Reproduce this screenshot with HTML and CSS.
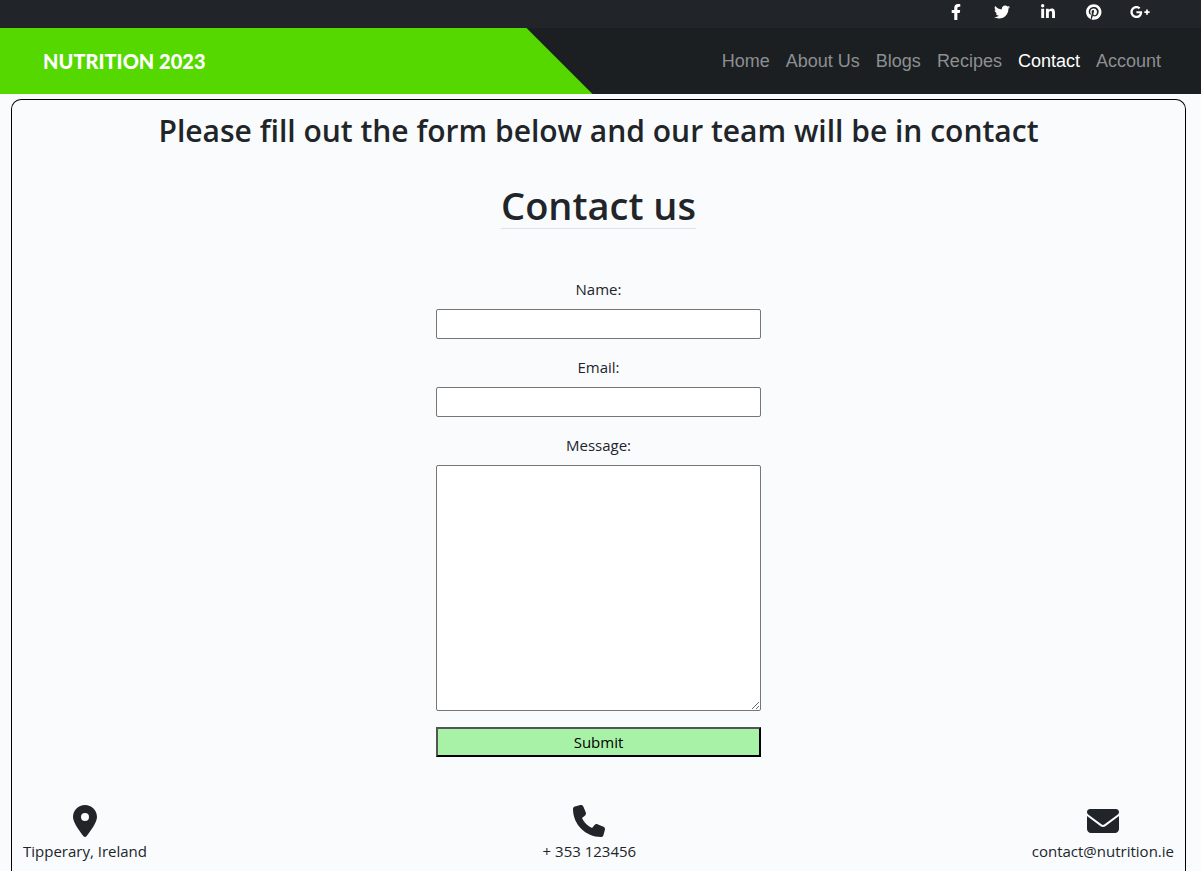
FILE: index.html
```html
<!DOCTYPE html>
<html lang="en">
<head>
<meta charset="utf-8">
<meta name="viewport" content="width=device-width, initial-scale=1">
<title>Nutrition 2023 - Contact</title>
<link rel="stylesheet" href="styles.css">
</head>
<body>
<div class="social">
  <a class="social-link" href="#" aria-label="Facebook"><svg class="social-icon" viewBox="0 0 320 512"><path d="M279.14 288l14.22-92.66h-88.91v-60.13c0-25.35 12.42-50.06 52.24-50.06h40.42V6.26S260.43 0 225.36 0c-73.22 0-121.08 44.38-121.08 124.72v70.62H22.89V288h81.39v224h100.17V288z"/></svg></a>
  <a class="social-link" href="#" aria-label="Twitter"><svg class="social-icon" viewBox="0 0 512 512"><path d="M459.37 151.716c.325 4.548.325 9.097.325 13.645 0 138.72-105.583 298.558-298.558 298.558-59.452 0-114.68-17.219-161.137-47.106 8.447.974 16.568 1.299 25.34 1.299 49.055 0 94.213-16.568 130.274-44.832-46.132-.975-84.792-31.188-98.112-72.772 6.498.974 12.995 1.624 19.818 1.624 9.421 0 18.843-1.3 27.614-3.573-48.081-9.747-84.143-51.98-84.143-102.985v-1.299c13.969 7.797 30.214 12.67 47.431 13.319-28.264-18.843-46.781-51.005-46.781-87.391 0-19.492 5.197-37.36 14.294-52.954 51.655 63.675 129.3 105.258 216.365 109.807-1.624-7.797-2.599-15.918-2.599-24.04 0-57.828 46.782-104.934 104.934-104.934 30.213 0 57.502 12.67 76.67 33.137 23.715-4.548 46.456-13.32 66.599-25.34-7.798 24.366-24.366 44.833-46.132 57.827 21.117-2.273 41.584-8.122 60.426-16.243-14.292 20.791-32.161 39.308-52.628 54.253z"/></svg></a>
  <a class="social-link" href="#" aria-label="LinkedIn"><svg class="social-icon" viewBox="0 0 448 512"><path d="M100.28 448H7.4V148.9h92.88zM53.79 108.1C24.09 108.1 0 83.5 0 53.8a53.79 53.79 0 0 1 107.58 0c0 29.7-24.1 54.3-53.79 54.3zM447.9 448h-92.68V302.4c0-34.7-.7-79.2-48.29-79.2-48.29 0-55.69 37.7-55.69 76.7V448h-92.78V148.9h89.08v40.8h1.3c12.4-23.5 42.69-48.3 87.88-48.3 94 0 111.28 61.9 111.28 142.3V448z"/></svg></a>
  <a class="social-link" href="#" aria-label="Pinterest"><svg class="social-icon" viewBox="0 0 496 512"><path d="M496 256c0 137-111 248-248 248-25.6 0-50.2-3.9-73.4-11.1 10.1-16.5 25.2-43.5 30.8-65 3-11.6 15.4-59 15.4-59 8.1 15.4 31.7 28.5 56.8 28.5 74.8 0 128.7-68.8 128.7-154.3 0-81.9-66.9-143.2-152.9-143.2-107 0-163.9 71.8-163.9 150.1 0 36.4 19.4 81.7 50.3 96.1 4.7 2.2 7.2 1.2 8.3-3.3.8-3.4 5-20.3 6.9-28.1.6-2.5.3-4.7-1.7-7.1-10.1-12.5-18.3-35.3-18.3-56.6 0-54.7 41.4-107.6 112-107.6 60.9 0 103.6 41.5 103.6 100.9 0 67.1-33.9 113.6-78 113.6-24.3 0-42.6-20.1-36.7-44.8 7-29.5 20.5-61.3 20.5-82.6 0-19-10.2-34.9-31.4-34.9-24.9 0-44.9 25.7-44.9 60.2 0 22 7.4 36.8 7.4 36.8s-24.5 103.8-29 123.2c-5 21.4-3 51.6-.9 71.2C65.4 450.9 0 361.1 0 256 0 119 111 8 248 8s248 111 248 248z"/></svg></a>
  <a class="social-link" href="#" aria-label="Google Plus"><svg class="social-icon" viewBox="0 0 640 512"><path d="M386.061 228.496c1.834 9.692 3.143 19.384 3.143 31.956C389.204 370.205 315.599 448 204.8 448c-106.084 0-192-85.915-192-192s85.916-192 192-192c51.864 0 95.083 18.859 128.611 50.292l-52.126 50.03c-14.145-13.621-39.028-29.599-76.485-29.599-65.484 0-118.92 54.221-118.92 121.277 0 67.056 53.436 121.277 118.92 121.277 75.961 0 104.513-54.745 108.965-82.773H204.8v-66.009h181.261zm185.406 6.437V179.2h-56.001v55.733h-55.733v56.001h55.733v55.733h56.001v-55.733H627.2v-56.001h-55.733z"/></svg></a>
</div>
<header class="header">
  <div class="brand-panel"><a class="brand" href="#">NUTRITION 2023</a></div>
  <nav class="nav">
    <a class="nav-link" href="#">Home</a>
    <a class="nav-link" href="#">About Us</a>
    <a class="nav-link" href="#">Blogs</a>
    <a class="nav-link" href="#">Recipes</a>
    <a class="nav-link nav-link-active" href="#" aria-current="page">Contact</a>
    <a class="nav-link" href="#">Account</a>
  </nav>
</header>
<main class="main">
  <h2 class="intro">Please fill out the form below and our team will be in contact</h2>
  <h1 class="title">Contact us</h1>
  <form class="form">
    <label class="label" for="name">Name:</label>
    <input class="field" id="name" type="text">
    <label class="label" for="email">Email:</label>
    <input class="field" id="email" type="email">
    <label class="label" for="message">Message:</label>
    <textarea class="field message" id="message"></textarea>
    <button class="submit" type="submit">Submit</button>
  </form>
  <div class="details">
    <div class="detail"><svg class="detail-icon" viewBox="0 0 384 512"><path d="M215.7 499.2C267 435 384 279.4 384 192C384 86 298 0 192 0S0 86 0 192c0 87.4 117 243 168.3 307.2c12.3 15.3 35.1 15.3 47.4 0zM192 128a64 64 0 1 1 0 128 64 64 0 1 1 0-128z"/></svg><span>Tipperary, Ireland</span></div>
    <div class="detail"><svg class="detail-icon" viewBox="0 0 512 512"><path d="M164.9 24.6c-7.7-18.6-28-28.5-47.4-23.2l-88 24C12.1 30.2 0 46 0 64C0 311.4 200.6 512 448 512c18 0 33.8-12.1 38.6-29.5l24-88c5.3-19.4-4.6-39.7-23.2-47.4l-96-40c-16.3-6.8-35.2-2.1-46.3 11.6L304.7 368C234.3 334.7 177.3 277.7 144 207.3L193.3 167c13.7-11.2 18.4-30 11.6-46.3l-40-96z"/></svg><span>+ 353 123456</span></div>
    <div class="detail"><svg class="detail-icon" viewBox="0 0 512 512"><path d="M48 64C21.5 64 0 85.5 0 112c0 15.1 7.1 29.3 19.2 38.4L236.8 313.6c11.4 8.5 27 8.5 38.4 0L492.8 150.4c12.1-9.1 19.2-23.3 19.2-38.4c0-26.5-21.5-48-48-48H48zM0 176V384c0 35.3 28.7 64 64 64H448c35.3 0 64-28.7 64-64V176L294.4 339.2c-22.8 17.1-54 17.1-76.8 0L0 176z"/></svg><span>contact@nutrition.ie</span></div>
  </div>
</main>
</body>
</html>
```
FILE: styles.css
```css
* {
  box-sizing: border-box;
}

body {
  margin: 0;
  min-height: 100vh;
  display: flex;
  flex-direction: column;
  background: #f9fbfd;
  color: #212529;
  font: 15px/24px "Segoe UI", "Open Sans", "Noto Sans", sans-serif;
}

.social {
  display: flex;
  justify-content: flex-end;
  padding: 4px 38px 8px;
  background: #212529;
}

.social-link {
  display: flex;
  justify-content: center;
  width: 46px;
}

.social-icon {
  height: 16px;
  fill: #fff;
}

.header {
  display: flex;
  justify-content: space-between;
  height: 66px;
  background: #1b1f22;
}

.brand-panel {
  display: flex;
  align-items: center;
  width: 50%;
  padding-left: 43px;
  background: #55d700;
  clip-path: polygon(0 0, calc(100% - 74px) 0, calc(100% - 8px) 100%, 0 100%);
}

.brand {
  color: #fff;
  font: 900 20px/24px "Comic Sans MS", Lato, sans-serif;
  text-decoration: none;
}

.nav {
  display: flex;
  align-items: center;
  gap: 16px;
  padding-right: 40px;
}

.nav-link {
  color: #8d8f91;
  font: 18px/24px "Liberation Sans", Arial, sans-serif;
  text-decoration: none;
}

.nav-link-active {
  color: #fff;
}

.main {
  flex: 1;
  display: flex;
  flex-direction: column;
  align-items: center;
  margin: 5px 15px 0 11px;
  padding: 12px 11px 0;
  border: 1px solid #000;
  border-bottom: 0;
  border-radius: 10px 10px 0 0;
}

.intro {
  margin: 0 0 32px;
  font-size: 30px;
  line-height: 38px;
  font-weight: 600;
  text-align: center;
}

.title {
  margin: 0 0 48px;
  border-bottom: 1px solid #dee2e6;
  font-size: 38px;
  line-height: 46px;
  font-weight: 600;
}

.form {
  display: flex;
  flex-direction: column;
  width: 325px;
  max-width: 100%;
}

.label {
  margin-bottom: 8px;
  text-align: center;
}

.field {
  height: 30px;
  margin: 0 0 16px;
  border: 1px solid #767676;
  border-radius: 2px;
  background: #fff;
  font: inherit;
}

.message {
  height: 246px;
  resize: vertical;
}

.submit {
  height: 30px;
  padding: 0;
  border: 2px outset #000;
  background: #a8f2a8;
  color: #000;
  font: inherit;
}

.details {
  display: flex;
  justify-content: space-between;
  align-self: stretch;
  margin-top: 48px;
}

.detail {
  display: flex;
  flex-direction: column;
  align-items: center;
  gap: 2px;
}

.detail-icon {
  height: 32px;
  fill: #212529;
}
```
